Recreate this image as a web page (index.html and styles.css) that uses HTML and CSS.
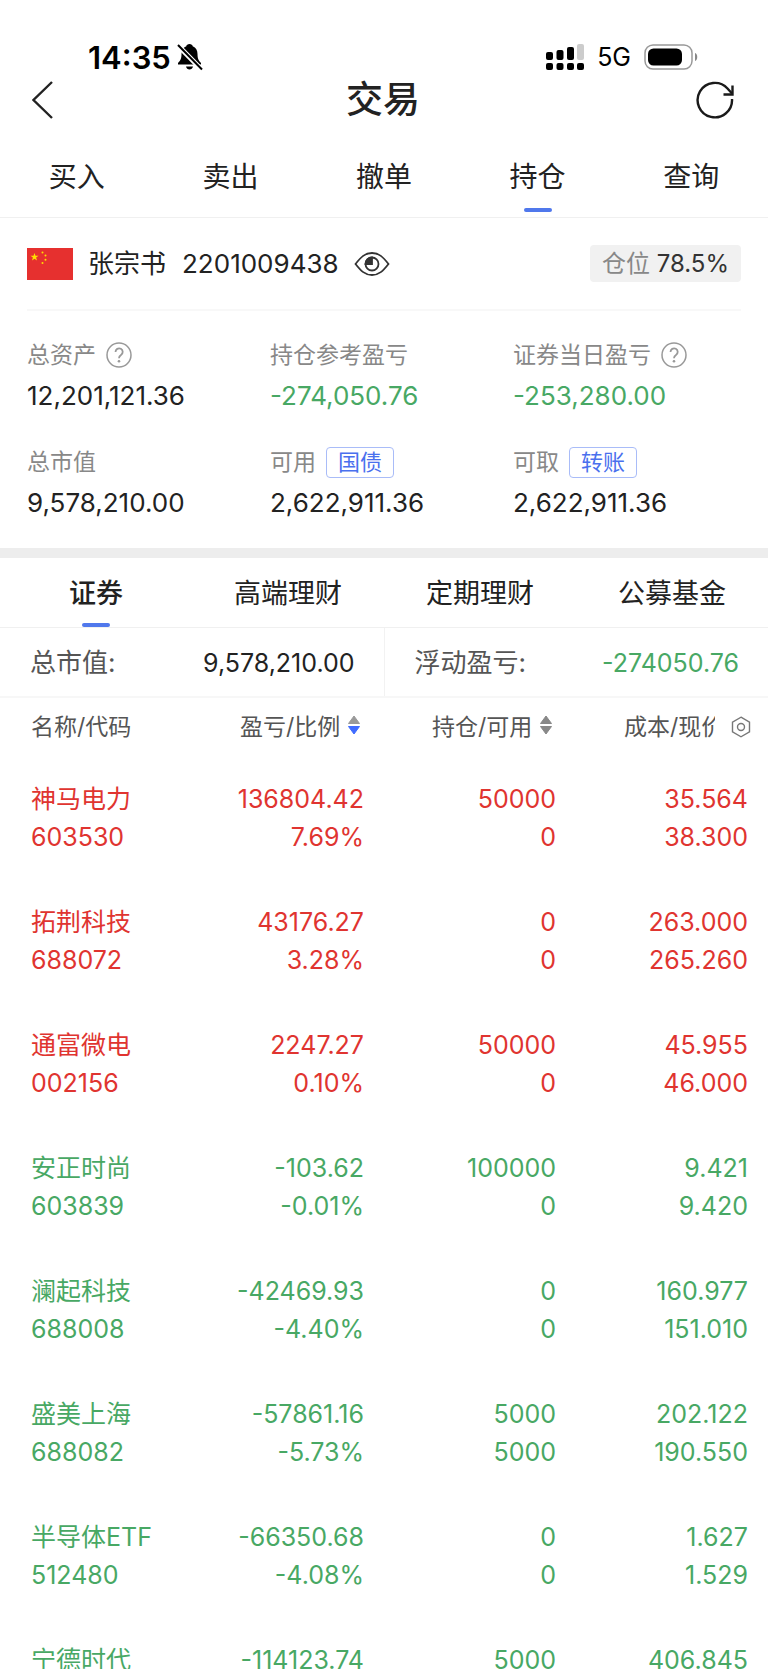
FILE: index.html
```html
<!DOCTYPE html>
<html lang="zh-CN">
<head>
    <meta charset="UTF-8">
    <meta name="viewport" content="width=device-width, initial-scale=1.0">
    <title>交易</title>
    <link rel="stylesheet" href="styles.css">
</head>
<body>
    <div class="status-bar">
        <div class="status-left">
            <span class="time">14:35</span>
            <svg width="26" height="28" viewBox="0 0 26 28">
                <path d="M12.5 1c-1.800 0-3 1-3.200 2.200C6 4.500 4.500 7.500 4.500 11c0 4.500-1 6.500-3.500 9v1.500h23V20c-2.500-2.500-3.500-4.500-3.500-9 0-3.500-1.500-6.500-4.800-7.800C15.500 2 14.300 1 12.500 1zM9 23.500c.4 1.800 1.800 3 3.500 3s3.100-1.200 3.500-3z"/>
                <path d="M0 1.500L25 27" stroke="#fff" stroke-width="5"/>
                <path d="M1 2l24 24.500" stroke="#000" stroke-width="2"/>
            </svg>
        </div>
        <div class="status-right">
            <svg width="38" height="28" viewBox="0 0 38 28">
                <rect x="0" y="9" width="7" height="8" rx="2"/>
                <rect x="10.500" y="7" width="7" height="10" rx="2"/>
                <rect x="21" y="4" width="7" height="13" rx="2"/>
                <rect x="31" y="1" width="7" height="16" rx="2" fill="#ccc"/>
                <rect x="0" y="20" width="7" height="7" rx="2"/>
                <rect x="10.500" y="20" width="7" height="7" rx="2"/>
                <rect x="21" y="20" width="7" height="7" rx="2"/>
                <rect x="31" y="20" width="7" height="7" rx="2"/>
            </svg>
            <span class="network">5G</span>
            <svg width="54" height="26" viewBox="0 0 54 26">
                <rect x="1" y="1" width="47" height="24" rx="8" fill="none" stroke="#999" stroke-width="1.500"/>
                <rect x="4" y="4.500" width="34" height="17" rx="5.500"/>
                <path d="M51 9c3 1 3 7 0 8z" fill="#888"/>
            </svg>
        </div>
    </div>

    <header class="header">
        <button class="icon-btn" aria-label="返回">
            <svg width="22" height="40" viewBox="0 0 22 40">
                <path d="M20 2L1.500 20 20 38" fill="none" stroke="#222" stroke-width="2.400"/>
            </svg>
        </button>
        <h1>交易</h1>
        <button class="icon-btn" aria-label="刷新">
            <svg width="38" height="38" viewBox="0 0 38 38" fill="none" stroke="#1a1a1a" stroke-width="2.400">
                <path d="M36 18A17.200 17.200 0 1 1 31.500 7.500L36 12.500"/>
                <path d="M36.500 4.500v9H27.500"/>
            </svg>
        </button>
    </header>

    <nav class="tabs main-tabs">
        <a href="#">买入</a>
        <a href="#">卖出</a>
        <a href="#">撤单</a>
        <a href="#" class="active">持仓</a>
        <a href="#">查询</a>
    </nav>

    <section class="account">
        <svg class="flag" width="46" height="32" viewBox="0 0 46 32">
            <rect width="46" height="32" fill="#e6302f"/>
            <g fill="#ffde00">
                <path d="M7.500 5l1 2.800h3l-2.400 1.800.9 2.900-2.500-1.700L5 12.500l.9-2.900L3.500 7.800h3z"/>
                <circle cx="15.500" cy="4.500" r="1"/>
                <circle cx="18.500" cy="7.500" r="1"/>
                <circle cx="18.500" cy="11.800" r="1"/>
                <circle cx="15.500" cy="15" r="1"/>
            </g>
        </svg>
        <span class="name">张宗书</span>
        <span class="account-no">2201009438</span>
        <button class="icon-btn" aria-label="隐藏金额">
            <svg width="36" height="26" viewBox="0 0 36 26" fill="none" stroke="#333" stroke-width="1.800">
                <path d="M1.500 13C7 6 11 2 18 2s11 4 16.500 11C29 20 25 24 18 24S7 20 1.500 13z"/>
                <circle cx="18" cy="13" r="6.500"/>
                <path d="M18 13h-6.500A6.500 6.500 0 0 1 18 6.500z" fill="#333"/>
            </svg>
        </button>
        <span class="position">仓位 <b>78.5%</b></span>
    </section>

    <section class="stats">
        <div class="stat">
            <div class="label">总资产
                <svg class="help" width="26" height="26" viewBox="0 0 26 26" fill="none" stroke="#999" stroke-width="1.500">
                    <circle cx="13" cy="13" r="12"/>
                    <path d="M9.500 10a3.600 3.600 0 1 1 5.500 3c-1.500 1-2 1.600-2 3.200" stroke-width="1.800"/>
                    <circle cx="13" cy="19.200" r="1.300" fill="#999" stroke="none"/>
                </svg>
            </div>
            <div class="value">12,201,121.36</div>
        </div>
        <div class="stat">
            <div class="label">持仓参考盈亏</div>
            <div class="value down">-274,050.76</div>
        </div>
        <div class="stat">
            <div class="label">证券当日盈亏
                <svg class="help" width="26" height="26" viewBox="0 0 26 26" fill="none" stroke="#999" stroke-width="1.500">
                    <circle cx="13" cy="13" r="12"/>
                    <path d="M9.500 10a3.600 3.600 0 1 1 5.500 3c-1.500 1-2 1.600-2 3.200" stroke-width="1.800"/>
                    <circle cx="13" cy="19.200" r="1.300" fill="#999" stroke="none"/>
                </svg>
            </div>
            <div class="value down">-253,280.00</div>
        </div>
        <div class="stat">
            <div class="label">总市值</div>
            <div class="value">9,578,210.00</div>
        </div>
        <div class="stat">
            <div class="label">可用 <button class="tag">国债</button></div>
            <div class="value">2,622,911.36</div>
        </div>
        <div class="stat">
            <div class="label">可取 <button class="tag">转账</button></div>
            <div class="value">2,622,911.36</div>
        </div>
    </section>

    <nav class="tabs sub-tabs">
        <a href="#" class="active">证券</a>
        <a href="#">高端理财</a>
        <a href="#">定期理财</a>
        <a href="#">公募基金</a>
    </nav>

    <section class="summary">
        <div>总市值:<span class="amount">9,578,210.00</span></div>
        <div>浮动盈亏:<span class="amount down">-274050.76</span></div>
    </section>

    <main class="holdings">
        <table>
            <thead>
                <tr>
                    <th>名称/代码</th>
                    <th>
                        <span class="sort">盈亏/比例
                            <svg width="12" height="20" viewBox="0 0 12 20">
                                <path d="M6 1l5.500 7.500H.5z" fill="#999" stroke="#999" stroke-linejoin="round"/>
                                <path d="M6 19l5.500-7.500H.5z" fill="#3f6bff" stroke="#3f6bff" stroke-linejoin="round"/>
                            </svg>
                        </span>
                    </th>
                    <th>
                        <span class="sort">持仓/可用
                            <svg width="12" height="20" viewBox="0 0 12 20">
                                <path d="M6 1l5.500 7.500H.5zM6 19l5.500-7.500H.5z" fill="#888" stroke="#888" stroke-linejoin="round"/>
                            </svg>
                        </span>
                    </th>
                    <th>
                        <span class="sort">成本/现价</span>
                        <button class="icon-btn settings" aria-label="设置">
                            <svg width="20" height="22" viewBox="0 0 20 22" fill="none" stroke="#777" stroke-width="1.400">
                                <path d="M10 1.200l8.500 4.900v9.800L10 20.800l-8.500-4.900V6.100z"/>
                                <circle cx="10" cy="11" r="3.500"/>
                            </svg>
                        </button>
                    </th>
                </tr>
            </thead>
            <tbody>
                <tr class="up">
                    <td>神马电力<br>603530</td>
                    <td>136804.42<br>7.69%</td>
                    <td>50000<br>0</td>
                    <td>35.564<br>38.300</td>
                </tr>
                <tr class="up">
                    <td>拓荆科技<br>688072</td>
                    <td>43176.27<br>3.28%</td>
                    <td>0<br>0</td>
                    <td>263.000<br>265.260</td>
                </tr>
                <tr class="up">
                    <td>通富微电<br>002156</td>
                    <td>2247.27<br>0.10%</td>
                    <td>50000<br>0</td>
                    <td>45.955<br>46.000</td>
                </tr>
                <tr class="down">
                    <td>安正时尚<br>603839</td>
                    <td>-103.62<br>-0.01%</td>
                    <td>100000<br>0</td>
                    <td>9.421<br>9.420</td>
                </tr>
                <tr class="down">
                    <td>澜起科技<br>688008</td>
                    <td>-42469.93<br>-4.40%</td>
                    <td>0<br>0</td>
                    <td>160.977<br>151.010</td>
                </tr>
                <tr class="down">
                    <td>盛美上海<br>688082</td>
                    <td>-57861.16<br>-5.73%</td>
                    <td>5000<br>5000</td>
                    <td>202.122<br>190.550</td>
                </tr>
                <tr class="down">
                    <td>半导体ETF<br>512480</td>
                    <td>-66350.68<br>-4.08%</td>
                    <td>0<br>0</td>
                    <td>1.627<br>1.529</td>
                </tr>
                <tr class="down">
                    <td>宁德时代</td>
                    <td>-114123.74</td>
                    <td>5000</td>
                    <td>406.845</td>
                </tr>
            </tbody>
        </table>
    </main>
</body>
</html>
```
FILE: styles.css
```css
* {
  margin: 0;
  padding: 0;
  box-sizing: border-box;
}
body {
  font-family: Inter, "Noto Sans CJK SC", sans-serif;
  font-size: 25px;
  color: #222;
  background-color: #fff;
  height: 100vh;
  overflow: hidden;
  display: flex;
  flex-direction: column;
}
body > * {
  flex-shrink: 0;
}
a {
  color: inherit;
  text-decoration: none;
}
svg {
  display: block;
  flex-shrink: 0;
}
.icon-btn {
  border: none;
  background: none;
  cursor: pointer;
}
.up {
  color: #e03430;
}
.down {
  color: #48a864;
}

/* Phone status bar */
.status-bar {
  display: flex;
  justify-content: space-between;
  align-items: center;
  height: 76px;
  padding: 38px 70px 0 88px;
  color: #000;
}
.status-left,
.status-right {
  display: flex;
  align-items: center;
}
.status-left {
  gap: 6px;
}
.status-right {
  gap: 13px;
}
.time {
  font-size: 31px;
  font-weight: 600;
}
.network {
  font-size: 25px;
}

.header {
  display: flex;
  justify-content: space-between;
  align-items: center;
  height: 48px;
  padding: 0 34px 0 32px;
}
.header .icon-btn {
  width: 38px;
}
.header h1 {
  font-size: 37px;
  font-weight: 500;
  line-height: 42px;
}

/* Tabs */
.tabs {
  display: flex;
  border-bottom: 1px solid #f0f0f0;
}
.tabs a {
  flex: 1;
  position: relative;
  text-align: center;
}
.tabs .active::after {
  content: "";
  position: absolute;
  left: 50%;
  bottom: 0;
  width: 28px;
  height: 4px;
  margin-left: -14px;
  border-radius: 2px;
  background-color: #5078ec;
}
.main-tabs {
  height: 94px;
  padding-bottom: 5px;
  font-size: 28px;
  line-height: 106px;
}
.main-tabs a {
  height: 88px;
}
.sub-tabs {
  height: 80px;
  border-top: 10px solid #ededed;
  font-size: 27px;
  line-height: 72px;
}
.sub-tabs a {
  height: 69px;
}
.sub-tabs .active {
  font-weight: 500;
}

/* Account */
.account {
  display: flex;
  align-items: center;
  height: 93px;
  margin: 0 27px;
  border-bottom: 2px solid #f8f8f8;
}
.name,
.account-no {
  font-size: 26px;
  line-height: 38px;
}
.name {
  margin: 0 16px 0 15px;
}
.account-no {
  margin-right: 15px;
}
.position {
  margin-left: auto;
  padding: 0 12px;
  border-radius: 4px;
  background-color: #f1f1f1;
  font-size: 24px;
  line-height: 37px;
  color: #888;
}
.position b {
  font-weight: 400;
  color: #333;
}

.stats {
  display: grid;
  grid-template-columns: repeat(3, 1fr);
  row-gap: 25px;
  padding: 26px 12px 22px 27px;
}
.label {
  display: flex;
  align-items: center;
  gap: 10px;
  height: 36px;
  font-size: 23px;
  line-height: 32px;
  color: #888;
}
.value {
  font-size: 26px;
  line-height: 46px;
}
.tag {
  height: 31px;
  padding: 0 11px;
  border: 1px solid #a9bcf8;
  border-radius: 4px;
  background: none;
  font-family: inherit;
  font-size: 22px;
  line-height: 28px;
  color: #4a70ee;
}

.summary {
  display: flex;
  border-bottom: 2px solid #f7f7f7;
}
.summary div {
  flex: 1;
  display: flex;
  justify-content: space-between;
  height: 68px;
  padding: 0 29px 0 30px;
  font-size: 26px;
  line-height: 70px;
  color: #555;
}
.summary div:first-child {
  border-right: 1px solid #f2f2f2;
}
.summary .amount {
  font-size: 25px;
  color: #222;
}
.summary .down {
  color: #48a864;
}

/* Holdings */
.holdings {
  padding-right: 20px;
}
.holdings table {
  width: 100%;
  table-layout: fixed;
  border-collapse: collapse;
}
.holdings th {
  height: 58px;
  padding-bottom: 4px;
  font-size: 23px;
  font-weight: 400;
  color: #555;
  white-space: nowrap;
  position: relative;
}
.holdings th:first-child {
  width: 172px;
}
.holdings th:first-child,
.holdings td:first-child {
  padding-left: 31px;
  text-align: left;
}
.sort {
  display: flex;
  align-items: center;
  gap: 8px;
  padding-left: 68px;
}
.settings {
  position: absolute;
  top: 0;
  right: -20px;
  width: 53px;
  height: 58px;
  padding-left: 16px;
  background-color: #fff;
}
.holdings td {
  height: 123px;
  padding-top: 24px;
  line-height: 38px;
  text-align: right;
  vertical-align: top;
  white-space: nowrap;
}
```
